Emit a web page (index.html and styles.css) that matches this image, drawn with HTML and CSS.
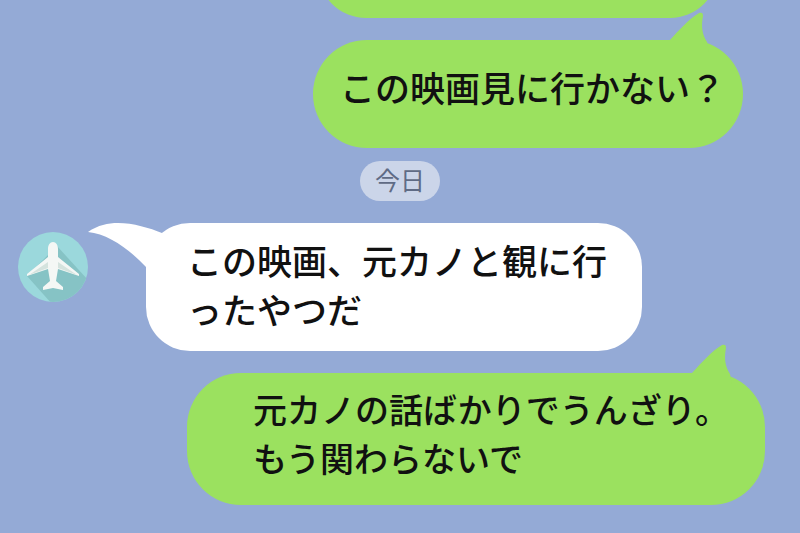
FILE: index.html
```html
<!DOCTYPE html>
<html lang="ja">
<head>
<meta charset="utf-8">
<title>トーク</title>
<link rel="stylesheet" href="styles.css">
</head>
<body>
<div class="chat">
  <div class="bubble green prev"></div>

  <div class="bubble green first">
    <svg class="tail tail-right" width="46" height="40" viewBox="0 0 46 40"><path d="M4 29C14 18 24 7 34 1C37 0 38 1 38 4C36 14 37 22 42 30L44 40H4Z"/></svg>
    <p class="msg">この映画見に行かない？</p>
  </div>

  <div class="date">今日</div>

  <div class="row">
    <svg class="avatar" width="70" height="70" viewBox="0 0 70 70">
      <clipPath id="round"><circle cx="35" cy="35" r="35"/></clipPath>
      <circle cx="35" cy="35" r="35" fill="#9bd8dc"/>
      <path clip-path="url(#round)" d="M39 14L70 48V72H34L9 44Z" fill="#86c3c5"/>
      <path d="M35 10C38 10 40 13 40 17V25L61 42V44L40 37L38 49L45 55V58L35 56L25 58V55L32 49L30 37L9 44V42L30 25V17C30 13 32 10 35 10Z" fill="#f4f7f5"/>
      <path d="M40 30L59 43L40 36ZM30 30L11 43L30 36Z" fill="#d5e3de"/>
    </svg>
    <div class="bubble white second">
      <svg class="tail tail-left" width="80" height="60" viewBox="0 0 80 60"><path d="M0 12C10 5 20 3 30 3C45 3 62 8 74 13L80 20V60H58V47C40 28 20 14 0 12Z"/></svg>
      <p class="msg">この映画、元カノと観に行<br>ったやつだ</p>
    </div>
  </div>

  <div class="bubble green third">
    <svg class="tail tail-right-low" width="46" height="40" viewBox="0 0 46 40"><path d="M4 29C14 18 24 7 34 1C37 0 38 1 38 4C36 14 37 22 42 30L44 40H4Z"/></svg>
    <p class="msg">元カノの話ばかりでうんざり。<br>もう関わらないで</p>
  </div>
</div>
</body>
</html>
```
FILE: styles.css
```css
html, body {margin: 0; padding: 0; height: 100%; background-color: #94aad6;}
body {overflow: hidden;}
.chat {display: flex; flex-direction: column; align-items: flex-start; font-family: "Noto Sans CJK JP", sans-serif; font-weight: 500; color: #111111;}
p {margin: 0;}

.bubble {position: relative; box-sizing: border-box;}
.green {background-color: #9be15f; fill: #9be15f;}
.white {background-color: #ffffff; fill: #ffffff;}
.tail {position: absolute; display: block;}
.msg {font-size: 35px; line-height: 49px; white-space: nowrap;}

.prev {width: 400px; height: 96px; margin-top: -78px; margin-left: 318px; border-radius: 48px;}

.first {width: 430px; height: 108px; margin-top: 22px; margin-left: 313px; padding: 22px 0 0 27px; border-radius: 54px;}
.tail-right {right: 32px; top: -28px;}

.date {width: 80px; height: 40px; margin-top: 13px; margin-left: 360px; border-radius: 20px; background-color: #cbd5e9; color: #5f6b85; font-size: 25px; font-weight: 400; line-height: 37px; text-align: center;}

.row {display: flex; align-items: flex-start; margin-top: 22px; margin-left: 18px;}
.avatar {display: block; margin-top: 9px; margin-right: 58px;}
.second {width: 496px; height: 128px; padding: 12px 0 0 41px; border-radius: 44px;}
.tail-left {left: -58px; top: -3px;}

.third {width: 578px; height: 132px; margin-top: 22px; margin-left: 187px; padding: 11px 0 0 66px; border-radius: 54px;}
.third .msg {font-size: 34px; line-height: 49px;}
.tail-right-low {right: 31px; top: -29px;}
```
